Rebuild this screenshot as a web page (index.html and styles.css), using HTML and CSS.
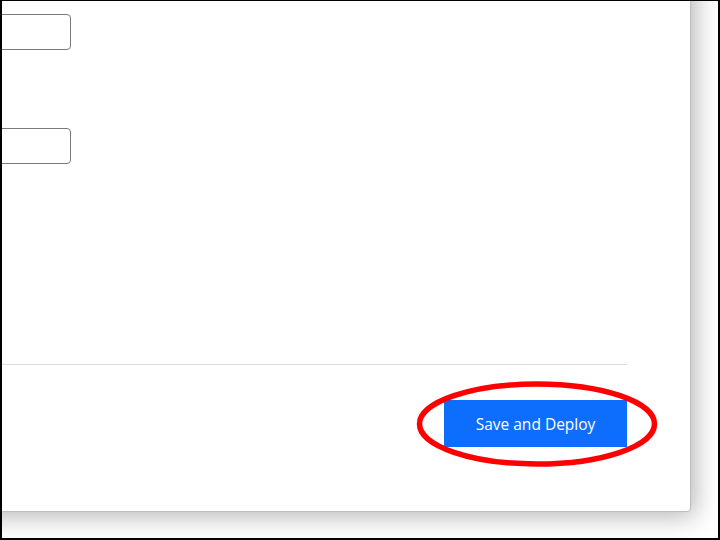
FILE: index.html
```html
<!DOCTYPE html>
<html lang="en">
<head>
<meta charset="utf-8">
<title>Deploy settings</title>
<link rel="stylesheet" href="styles.css">
</head>
<body>
<div class="frame">
  <div class="card">
    <div class="card-body">
      <div class="form-row">
        <label class="form-label" for="name">Name</label>
        <input class="form-input" id="name" type="text">
      </div>
      <div class="form-row">
        <label class="form-label" for="target">Target</label>
        <input class="form-input" id="target" type="text">
      </div>
    </div>
    <div class="card-footer">
      <button class="btn-primary" type="button">Save and Deploy</button>
    </div>
  </div>
</div>
<svg class="annotation" width="720" height="540" viewBox="0 0 720 540" aria-hidden="true">
  <ellipse cx="537" cy="424" rx="117.5" ry="40" fill="none" stroke="#ff0000" stroke-width="5.5"/>
</svg>
</body>
</html>
```
FILE: styles.css
```css
html, body {
  margin: 0;
  padding: 0;
  background: #ffffff;
}

body {
  font-family: "Open Sans", "Noto Sans", sans-serif;
  position: relative;
  width: 720px;
  height: 540px;
  overflow: hidden;
}

.frame {
  width: 720px;
  height: 540px;
  box-sizing: border-box;
  border-style: solid;
  border-color: #000000;
  border-width: 1px 2px 2px 2px;
  overflow: hidden;
  background: #ffffff;
}

.card {
  box-sizing: border-box;
  width: 989px;
  height: 551px;
  margin: -40px 0 0 -300px;
  background: #ffffff;
  border: 1px solid #bdbdbd;
  border-radius: 4px;
  box-shadow: 4px 4px 26px rgba(0, 0, 0, 0.3);
  display: flex;
  flex-direction: column;
}

.card-body {
  flex: 1;
  padding: 52px 63px 0 64px;
  display: flex;
  flex-direction: column;
  gap: 78px;
}

.form-row {
  display: grid;
  grid-template-columns: 150px 154px;
  align-items: center;
}

.form-label {
  font-size: 15px;
  color: #212529;
}

.form-input {
  box-sizing: border-box;
  height: 36px;
  width: 154px;
  border: 1px solid #7a7a7a;
  border-radius: 4px;
  background: #ffffff;
  padding: 0 10px;
  font: inherit;
}

.card-footer {
  margin: 0 63px 0 0;
  border-top: 1px solid #dcdcdc;
  padding: 35px 0 64px;
  display: flex;
  justify-content: flex-end;
}

.btn-primary {
  box-sizing: border-box;
  width: 183px;
  height: 47px;
  border: none;
  border-radius: 0;
  background: #0d6efd;
  color: #ffffff;
  font-family: "Open Sans", "Noto Sans", sans-serif;
  font-size: 15.5px;
  line-height: 1;
  padding: 2px 0 0;
}

.annotation {
  position: absolute;
  top: 0;
  left: 0;
  pointer-events: none;
}
```
